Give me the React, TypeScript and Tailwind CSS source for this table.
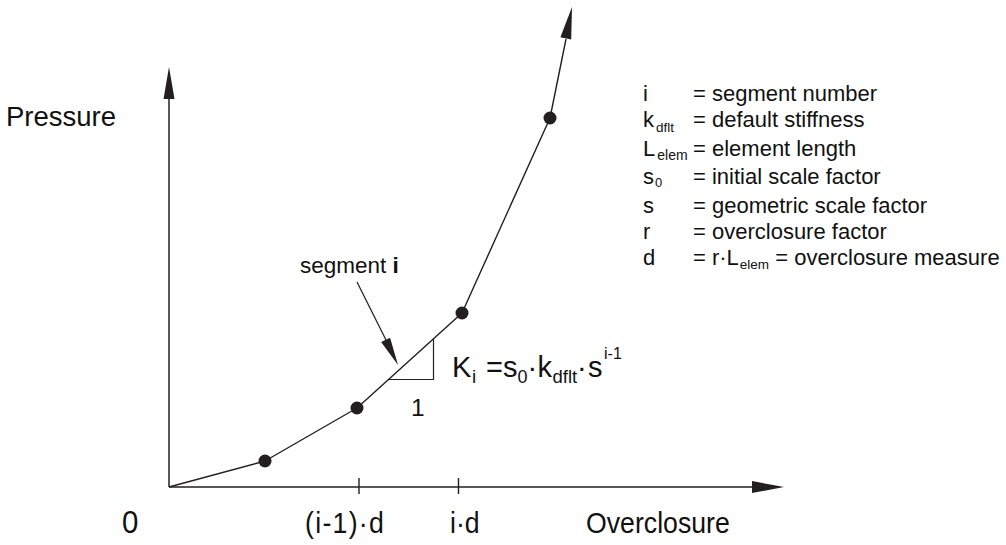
import React from 'react'

const ink = '#231f20'

// points on the pressure-overclosure curve
const curve: [number, number][] = [
  [169, 487],
  [265, 461],
  [357, 408],
  [462, 313],
  [550, 118],
  [566, 39],
]
const dots = curve.slice(1, 5)

function Arrowhead({ tip, from, len, half }: { tip: [number, number]; from: [number, number]; len: number; half: number }) {
  const dx = tip[0] - from[0]
  const dy = tip[1] - from[1]
  const d = Math.hypot(dx, dy)
  const ux = dx / d
  const uy = dy / d
  const bx = tip[0] - ux * len
  const by = tip[1] - uy * len
  const px = -uy * half
  const py = ux * half
  const pts = `${tip[0]},${tip[1]} ${bx + px},${by + py} ${bx - px},${by - py}`
  return <polygon points={pts} fill={ink} />
}

// axis labels are set a little narrower than normal, as in the drawing
function AxisLabel({ x, children, spacing = 0 }: { x: number; children: React.ReactNode; spacing?: number }) {
  return (
    <text transform={`translate(${x} 533) scale(0.92 1)`} fontSize="29" letterSpacing={spacing}>
      {children}
    </text>
  )
}

const legend = [
  { sym: <>i</>, text: <>= segment number</> },
  { sym: <>k<span className="relative top-[5px] ml-[2px] text-[13.5px]">dflt</span></>, text: <>= default stiffness</> },
  { sym: <>L<span className="relative top-[4px] ml-[2px] text-[14px]">elem</span></>, text: <>= element length</> },
  { sym: <>s<span className="relative top-[3px] ml-[1px] text-[13px]">0</span></>, text: <>= initial scale factor</> },
  { sym: <>s</>, text: <>= geometric scale factor</> },
  { sym: <>r</>, text: <>= overclosure factor</> },
  {
    sym: <>d</>,
    text: (
      <>
        = r·L<span className="relative top-[4px] ml-[1px] text-[13.5px]">elem</span> = overclosure measure
      </>
    ),
  },
]

export default function App() {
  return (
    <div className="relative w-[1006px] h-[545px] overflow-hidden bg-white text-[#111] font-['Liberation_Sans',Arial,sans-serif]">
      <svg width="1006" height="545" className="block">
        {/* axes */}
        <line x1="169" y1="487" x2="169" y2="95" stroke={ink} strokeWidth="1.5" />
        <Arrowhead tip={[169, 67]} from={[169, 487]} len={32} half={5.5} />
        <line x1="169" y1="487" x2="756" y2="487" stroke={ink} strokeWidth="1.5" />
        <Arrowhead tip={[784, 487]} from={[169, 487]} len={32} half={6} />

        {/* ticks */}
        <line x1="359" y1="478" x2="359" y2="494" stroke={ink} strokeWidth="1.4" />
        <line x1="458.5" y1="478" x2="458.5" y2="494" stroke={ink} strokeWidth="1.4" />

        {/* curve */}
        <polyline
          points={curve.map((p) => p.join(',')).join(' ')}
          fill="none"
          stroke={ink}
          strokeWidth="1.4"
          strokeLinejoin="round"
        />
        <Arrowhead tip={[572, 7]} from={[550, 118]} len={32} half={5.5} />
        {dots.map(([x, y]) => (
          <circle key={x} cx={x} cy={y} r="6.5" fill={ink} />
        ))}

        {/* slope triangle */}
        <polyline points="389,379.5 433.5,379.5 433.5,339" fill="none" stroke={ink} strokeWidth="1.2" />

        {/* pointer to segment i */}
        <line x1="357" y1="282" x2="390" y2="348" stroke={ink} strokeWidth="1.2" />
        <Arrowhead tip={[398, 365]} from={[357, 282]} len={28} half={5} />

        <g fill="#111">
          <text x="6" y="126" fontSize="27.5">Pressure</text>

          <AxisLabel x={122}>
            <tspan fontSize="32">0</tspan>
          </AxisLabel>
          <AxisLabel x={305} spacing={1.4}>(i-1)·d</AxisLabel>
          <AxisLabel x={450}>i·d</AxisLabel>
          <AxisLabel x={586}>Overclosure</AxisLabel>

          <text x="300" y="273" fontSize="22.5">
            segment <tspan fontWeight="bold">i</tspan>
          </text>
          <text x="411" y="416" fontSize="24.5">1</text>

          {/* stiffness formula */}
          <text fontSize="29">
            <tspan x="452" y="377">K</tspan>
            <tspan x="472" y="383" fontSize="19">i</tspan>
            <tspan x="486" y="377">=</tspan>
            <tspan x="503" y="377">s</tspan>
            <tspan x="517.5" y="383" fontSize="18">0</tspan>
            <tspan x="527.5" y="377">·</tspan>
            <tspan x="537.5" y="377">k</tspan>
            <tspan x="552.5" y="383" fontSize="18.5">dflt</tspan>
            <tspan x="577" y="377">·</tspan>
            <tspan x="588" y="377">s</tspan>
            <tspan x="604" y="359" fontSize="16">i-1</tspan>
          </text>
        </g>
      </svg>

      {/* legend */}
      <div className="absolute left-[643px] top-[81px] grid grid-cols-[50px_auto] text-[22px] leading-[26px] whitespace-nowrap">
        {legend.map((row, i) => (
          <React.Fragment key={i}>
            <div>{row.sym}</div>
            <div>{row.text}</div>
          </React.Fragment>
        ))}
      </div>
    </div>
  )
}
